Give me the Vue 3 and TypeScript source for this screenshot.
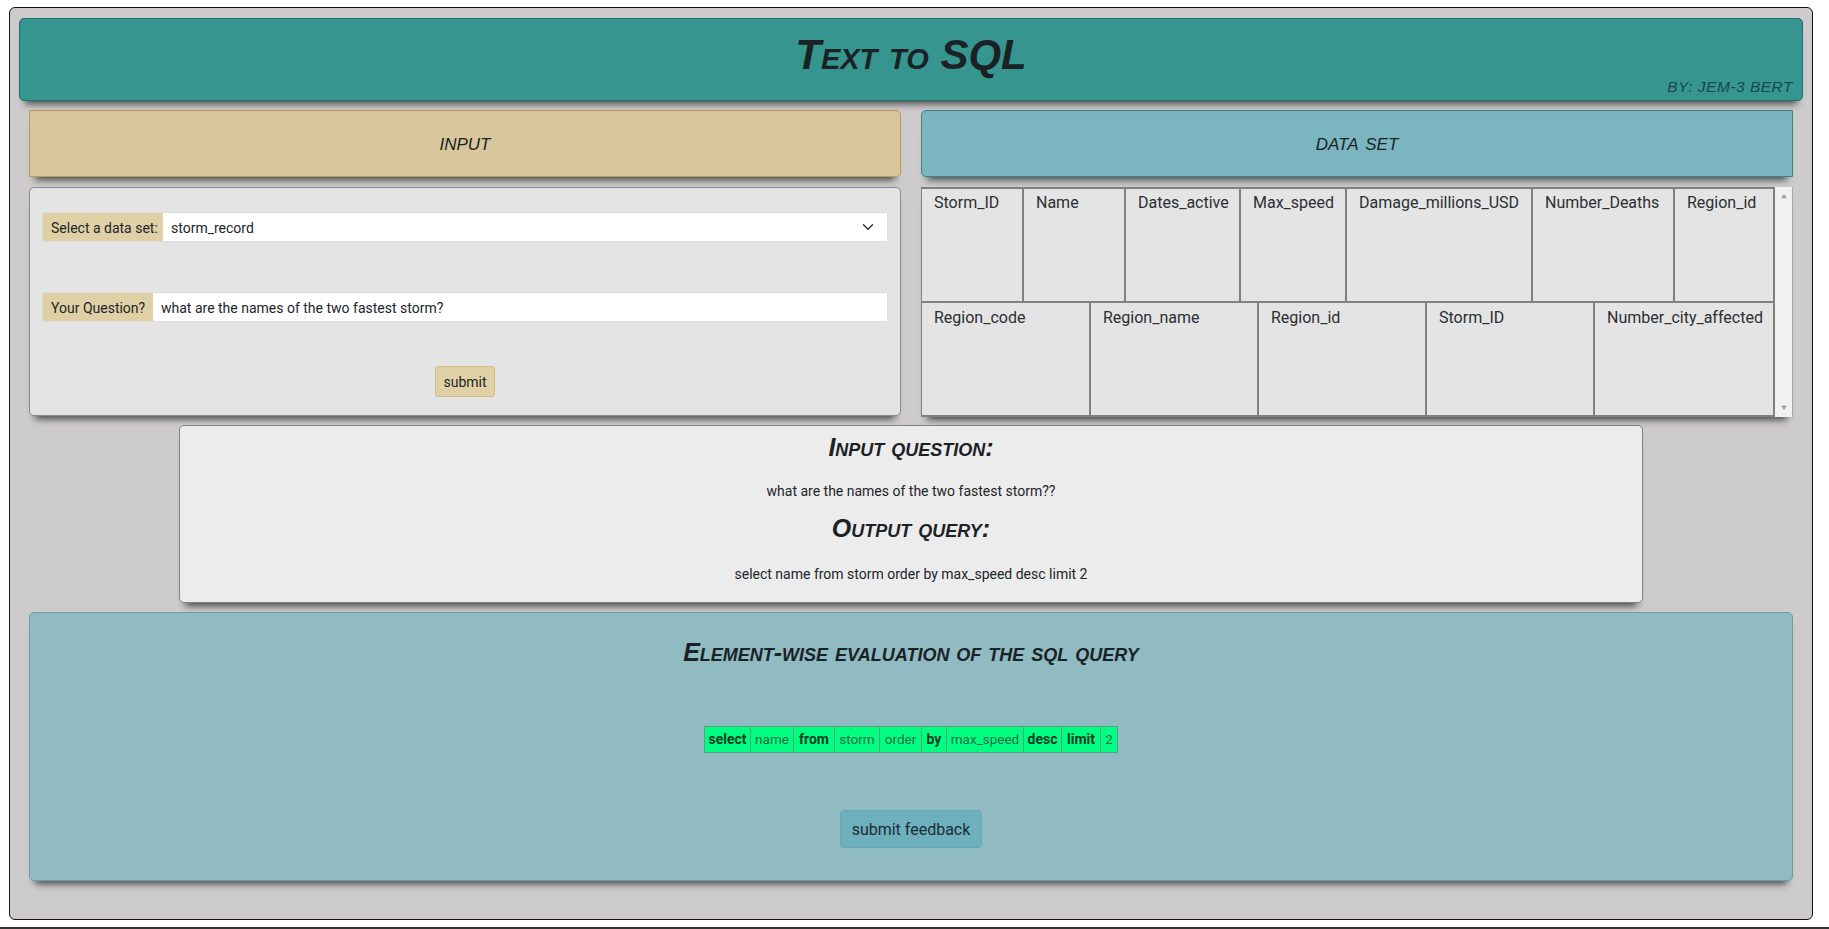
<script setup lang="ts">
const firstTable = [
  { name: 'Storm_ID', width: 102 },
  { name: 'Name', width: 102 },
  { name: 'Dates_active', width: 115 },
  { name: 'Max_speed', width: 106 },
  { name: 'Damage_millions_USD', width: 186 },
  { name: 'Number_Deaths', width: 142 },
  { name: 'Region_id', width: 100 },
]
const secondTable = [
  { name: 'Region_code', width: 169 },
  { name: 'Region_name', width: 168 },
  { name: 'Region_id', width: 168 },
  { name: 'Storm_ID', width: 168 },
  { name: 'Number_city_affected', width: 180 },
]
const tokens = [
  { text: 'select', keyword: true, width: 46 },
  { text: 'name', keyword: false, width: 43 },
  { text: 'from', keyword: true, width: 41 },
  { text: 'storm', keyword: false, width: 45 },
  { text: 'order', keyword: false, width: 42 },
  { text: 'by', keyword: true, width: 25 },
  { text: 'max_speed', keyword: false, width: 77 },
  { text: 'desc', keyword: true, width: 38 },
  { text: 'limit', keyword: true, width: 39 },
  { text: '2', keyword: false, width: 16 },
]
</script>

<template>
  <div class="page">
    <main class="shell">
      <header class="banner">
        <h1 class="hand title">Text to SQL</h1>
        <span class="hand byline">By: JEM-3 BERT</span>
      </header>

      <section class="columns">
        <div class="heading heading-input"><h2 class="hand">Input</h2></div>
        <div class="heading heading-data"><h2 class="hand">Data set</h2></div>

        <form class="input-card" @submit.prevent>
          <div class="field">
            <label class="addon addon-select" for="dataset">Select a data set:</label>
            <div class="select-wrap">
              <select id="dataset" class="control">
                <option>storm_record</option>
              </select>
              <svg class="chevron" viewBox="0 0 16 16" width="16" height="16" aria-hidden="true">
                <path d="M2 5l6 6 6-6" fill="none" stroke="#343a40" stroke-width="2" stroke-linecap="round" stroke-linejoin="round" />
              </svg>
            </div>
          </div>
          <div class="field">
            <label class="addon addon-question" for="question">Your Question?</label>
            <input id="question" class="control" value="what are the names of the two fastest storm?" />
          </div>
          <button class="submit" type="submit">submit</button>
        </form>

        <div class="data-card">
          <div class="tables">
            <div class="data-row">
              <div v-for="col in firstTable" :key="col.name" class="data-cell" :style="{ width: col.width + 'px' }">{{ col.name }}</div>
            </div>
            <div class="data-row">
              <div v-for="col in secondTable" :key="col.name" class="data-cell" :style="{ width: col.width + 'px' }">{{ col.name }}</div>
            </div>
          </div>
          <div class="scrollbar" aria-hidden="true">
            <svg viewBox="0 0 10 8" width="8" height="6"><path d="M5 1l4 6H1z" fill="#a3a3a3" /></svg>
            <svg viewBox="0 0 10 8" width="8" height="6"><path d="M5 7L1 1h8z" fill="#a3a3a3" /></svg>
          </div>
        </div>
      </section>

      <section class="result">
        <h3 class="hand">Input question:</h3>
        <p>what are the names of the two fastest storm??</p>
        <h3 class="hand">Output query:</h3>
        <p class="output-text">select name from storm order by max_speed desc limit 2</p>
      </section>

      <section class="evaluation">
        <h3 class="hand eval-title">Element-wise evaluation of the sql query</h3>
        <div class="tokens">
          <span
            v-for="token in tokens"
            :key="token.text"
            class="token"
            :class="{ keyword: token.keyword }"
            :style="{ width: token.width + 'px' }"
          >{{ token.text }}</span>
        </div>
        <button class="feedback" type="button">submit feedback</button>
      </section>
    </main>
    <div class="rule"></div>
  </div>
</template>

<style>
html,
body {
  margin: 0;
  background: #fff;
}
</style>

<style scoped>
* {
  box-sizing: border-box;
}
.page {
  width: 1829px;
  height: 929px;
  overflow: hidden;
  padding: 7px 16px 0 9px;
  font-family: Roboto, 'Open Sans', sans-serif;
  font-size: 14px;
  color: #212529;
}
.shell {
  height: 913px;
  border: 1px solid #111;
  border-radius: 6px;
  background: #cdcbcb;
  padding: 10px 9px 0;
  display: flex;
  flex-direction: column;
}
.hand {
  margin: 0;
  font-family: 'Liberation Sans', sans-serif;
  font-style: italic;
  font-weight: 400;
  font-variant: small-caps;
  color: #1b2226;
}
.banner {
  position: relative;
  height: 83px;
  background: #36958f;
  border: 1px solid #1f6f6a;
  border-radius: 5px;
  box-shadow: 0 9px 7px -6px #4a4a4a;
  display: flex;
  justify-content: center;
  align-items: flex-start;
  padding-top: 10px;
}
.title {
  font-size: 42px;
  font-weight: 700;
  line-height: 52px;
}
.byline {
  position: absolute;
  right: 9px;
  bottom: 3px;
  font-size: 15.5px;
  line-height: 20px;
  letter-spacing: 0.5px;
  font-variant: normal;
  text-transform: uppercase;
  color: #17484a;
}
.columns {
  margin: 9px 10px 0;
  display: grid;
  grid-template-columns: 872px 872px;
  column-gap: 20px;
  row-gap: 10px;
}
.heading {
  height: 67px;
  display: flex;
  align-items: center;
  justify-content: center;
  box-shadow: 0 9px 7px -6px #4a4a4a;
}
.heading h2 {
  font-size: 24px;
  line-height: 26px;
  padding-bottom: 3px;
  text-transform: lowercase;
  font-variant: small-caps;
}
.heading-input {
  background: #d8c79c;
  border: 1px solid #b99a58;
  border-radius: 0 5px 5px 0;
}
.heading-data {
  background: #7ab5c0;
  border: 1px solid #3f8285;
  border-radius: 5px 0 0 5px;
}
.input-card {
  height: 229px;
  background: #e4e4e4;
  border: 1px solid #888;
  border-radius: 5px;
  box-shadow: 0 9px 7px -6px #4a4a4a;
  padding: 24px 12px 0;
  display: flex;
  flex-direction: column;
}
.field {
  display: flex;
  height: 30px;
  margin-bottom: 50px;
  border: 1px solid #dcdcdc;
  border-radius: 3px;
  background: #fff;
}
.addon {
  flex: none;
  background: #e0d0a6;
  padding: 0 8px;
  line-height: 30px;
  white-space: nowrap;
}
.addon-select {
  width: 120px;
}
.addon-question {
  width: 110px;
}
.select-wrap {
  position: relative;
  flex: 1;
}
.control {
  display: block;
  width: 100%;
  height: 28px;
  border: 0;
  outline: 0;
  appearance: none;
  background: #fff;
  padding: 2px 8px 0;
  font: inherit;
  color: inherit;
}
.chevron {
  position: absolute;
  top: 8px;
  right: 13px;
  width: 12px;
  height: 12px;
}
.submit {
  align-self: center;
  width: 60px;
  height: 31px;
  margin-top: -6px;
  padding: 0;
  background: #e0d0a6;
  border: 1px solid #d3bd85;
  border-radius: 3px;
  font: inherit;
  color: inherit;
}
.data-card {
  height: 230px;
  display: flex;
  box-shadow: 0 9px 7px -6px #4a4a4a;
}
.tables {
  flex: 1;
  display: flex;
  flex-direction: column;
  background: #e4e4e4;
  border-left: 1px solid #808080;
  border-top: 2px solid #808080;
}
.data-row {
  display: flex;
  flex: 1;
}
.data-cell {
  flex: none;
  padding: 2px 0 0 12px;
  font-size: 16px;
  line-height: 24px;
  color: #2b2f33;
  border-right: 2px solid #808080;
  border-bottom: 2px solid #808080;
  white-space: nowrap;
}
.data-row + .data-row .data-cell {
  padding-top: 3px;
}
.scrollbar {
  width: 18px;
  background: #f1f1f1;
  border-right: 1px solid #a8a8a8;
  display: flex;
  flex-direction: column;
  align-items: center;
  justify-content: space-between;
  padding: 6px 0;
}
.result {
  width: 1464px;
  height: 178px;
  margin: 8px auto 0;
  background: #ececec;
  border: 1px solid #808080;
  border-radius: 5px;
  box-shadow: 0 9px 7px -6px #4a4a4a;
  text-align: center;
}
.result h3 {
  font-size: 25px;
  font-weight: 700;
  line-height: 30px;
}
.result h3:first-child {
  margin-top: 6px;
}
.result p {
  margin: 19px 0 12px;
  line-height: 20px;
}
.result .output-text {
  margin-top: 21px;
}
.evaluation {
  margin: 9px 10px 0;
  height: 269px;
  background: #91bbc3;
  border: 1px solid #6f9da5;
  border-radius: 5px;
  box-shadow: 0 9px 7px -6px #4a4a4a;
  display: flex;
  flex-direction: column;
  align-items: center;
}
.eval-title {
  font-size: 25px;
  font-weight: 700;
  line-height: 34px;
  margin-top: 22px;
}
.tokens {
  display: flex;
  margin-top: 57px;
  height: 27px;
  border: 1px solid #5d9d83;
  background: #00ff80;
}
.token {
  flex: none;
  text-align: center;
  line-height: 25px;
  font-size: 13.5px;
  color: #1d6a49;
  border-right: 1px solid #5d9d83;
}
.token:last-child {
  border-right: 0;
}
.keyword {
  font-size: 14px;
  font-weight: 700;
  color: #0b3d28;
}
.feedback {
  width: 142px;
  height: 38px;
  margin-top: 57px;
  background: #6eb0bd;
  border: 1px solid #69a9b5;
  border-radius: 4px;
  font: inherit;
  font-size: 16px;
  color: #1c2c35;
  padding: 0;
}
.rule {
  height: 2px;
  margin: 7px -16px 0 -9px;
  background: #333;
}
</style>
